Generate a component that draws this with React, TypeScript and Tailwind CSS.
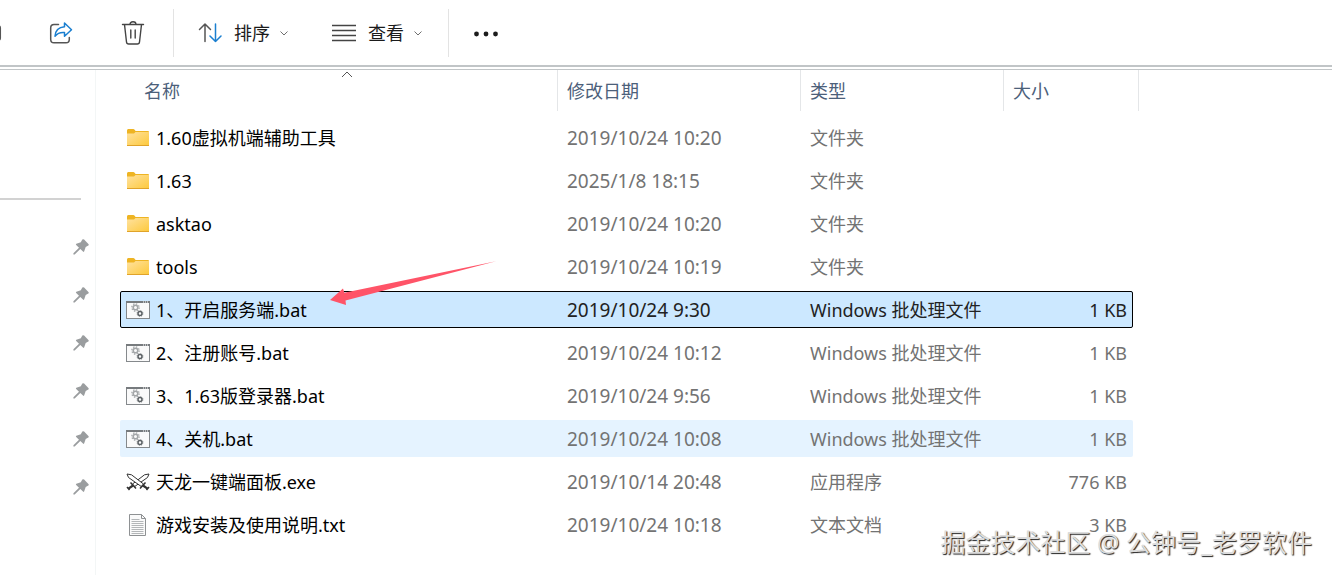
import { clsx } from "clsx";

type FileKind = "folder" | "bat" | "exe" | "txt";

type FileRow = {
  name: string;
  date: string;
  type: string;
  size: string;
  kind: FileKind;
};

const FILES: FileRow[] = [
  { name: "1.60虚拟机端辅助工具", date: "2019/10/24 10:20", type: "文件夹", size: "", kind: "folder" },
  { name: "1.63", date: "2025/1/8 18:15", type: "文件夹", size: "", kind: "folder" },
  { name: "asktao", date: "2019/10/24 10:20", type: "文件夹", size: "", kind: "folder" },
  { name: "tools", date: "2019/10/24 10:19", type: "文件夹", size: "", kind: "folder" },
  { name: "1、开启服务端.bat", date: "2019/10/24 9:30", type: "Windows 批处理文件", size: "1 KB", kind: "bat" },
  { name: "2、注册账号.bat", date: "2019/10/24 10:12", type: "Windows 批处理文件", size: "1 KB", kind: "bat" },
  { name: "3、1.63版登录器.bat", date: "2019/10/24 9:56", type: "Windows 批处理文件", size: "1 KB", kind: "bat" },
  { name: "4、关机.bat", date: "2019/10/24 10:08", type: "Windows 批处理文件", size: "1 KB", kind: "bat" },
  { name: "天龙一键端面板.exe", date: "2019/10/14 20:48", type: "应用程序", size: "776 KB", kind: "exe" },
  { name: "游戏安装及使用说明.txt", date: "2019/10/24 10:18", type: "文本文档", size: "3 KB", kind: "txt" },
];

const SELECTED = 4;
const HOVERED = 7;
const PINS = [1, 2, 3, 4, 5, 6];

function FolderIcon() {
  return (
    <svg width="24" height="24" viewBox="0 0 24 24">
      <defs>
        <linearGradient id="folder" x1="0" y1="0" x2="1" y2="1">
          <stop offset="0" stopColor="#ffe2a0" />
          <stop offset="1" stopColor="#fdc93c" />
        </linearGradient>
      </defs>
      <path d="M1 4.500q0-1.500 1.200-1.500h5.200q.6 0 1 .5L9.600 5H22q1 0 1 1v6H1z" fill="#eeb423" />
      <path d="M1 7.500h7L9.500 6H23v13.500H1z" fill="url(#folder)" />
      <path d="M1 19.500h22" stroke="#e0a32a" />
    </svg>
  );
}

function BatIcon() {
  return (
    <svg width="24" height="24" viewBox="0 0 24 24">
      <rect x=".5" y="3.500" width="23" height="17" fill="#fafafa" stroke="#85898c" />
      <path d="M0 4h24" stroke="#777b7e" strokeWidth="2" />
      <path d="M17 4h1M19 4h1M21 4h1" stroke="#fff" />
      <circle cx="9.500" cy="9.500" r="2.300" fill="none" stroke="#a3a6a8" strokeWidth="1.600" />
      <circle cx="9.500" cy="9.500" r="3.700" fill="none" stroke="#a3a6a8" strokeWidth="1.200" strokeDasharray="1.450 1.450" />
      <circle cx="14" cy="15.500" r="2" fill="none" stroke="#5c6164" strokeWidth="1.500" />
      <circle cx="14" cy="15.500" r="3" fill="none" stroke="#5c6164" strokeWidth=".6" strokeDasharray="1.180 1.180" />
    </svg>
  );
}

function SwordsIcon() {
  return (
    <svg width="24" height="24" viewBox="0 0 24 24" fill="none" stroke="#333">
      <path d="M23 4l-4.500.8L6.500 14l2.200 2.500L21.500 7.500z" fill="#fff" />
      <path d="M1 4l4.500.8L17.500 14l-2.200 2.500L2.500 7.500z" fill="#fff" />
      <path d="M4.500 12.500l5.500 6M19.500 12.500l-5.500 6" strokeWidth="1.500" />
      <path d="M7 15.500L2.500 18.700M17 15.500l4.500 3.200" strokeWidth="2.200" />
      <path d="M1 17l2.500 3M23 17l-2.500 3" strokeWidth="1.500" />
    </svg>
  );
}

function TextIcon() {
  return (
    <svg width="24" height="24" viewBox="0 0 24 24" fill="none" stroke="#8e9193">
      <path d="M3.500 1.500h12l4 4v17h-16z" fill="#fafafa" />
      <path d="M15.500 1.500v4h4" />
      <path d="M5.500 6.500h8M5.500 8.500h12M5.500 10.500h12M5.500 12.500h12M5.500 14.500h12M5.500 16.500h12M5.500 18.500h12M5.500 20.500h12" stroke="#b3b6b8" />
    </svg>
  );
}

function FileIcon({ kind }: { kind: FileKind }) {
  if (kind === "folder") return <FolderIcon />;
  if (kind === "bat") return <BatIcon />;
  if (kind === "exe") return <SwordsIcon />;
  return <TextIcon />;
}

function PinIcon() {
  return (
    <svg width="16" height="16" viewBox="0 0 16 16" fill="#9a9d9f">
      <path d="M9.300.6q.9-.8 1.800 0l4.300 4.300q.8.9-.1 1.500l-2.600 1.500-1.500 4.400q-.4 1-1.200.3L7.300 10 1.700 15.600H.4v-1.300L6 8.700 3.200 5.900q-.7-.8.2-1.200l4.400-1.500z" />
    </svg>
  );
}

function Chevron() {
  return (
    <svg width="8" height="8" viewBox="0 0 8 8" fill="none" stroke="#6f6f6f">
      <path d="M.5 2.500L4 6l3.500-3.500" />
    </svg>
  );
}

function Toolbar() {
  return (
    <header className="flex h-[65px] items-center overflow-hidden">
      <button aria-label="重命名" className="flex w-[49px] items-center">
        <svg width="2" height="16" viewBox="0 0 2 16" fill="none" stroke="#555" strokeWidth="1.500">
          <path d="M-2 .8Q.3 .8 .3 3v10q0 2.200-2.300 2.200" />
        </svg>
      </button>
      <button aria-label="共享" className="mr-12">
        <svg width="24" height="24" viewBox="0 0 24 24" fill="none" strokeWidth="1.500" strokeLinecap="round" strokeLinejoin="round">
          <path d="M9.500 3.500H5Q1.700 3.500 1.700 7v11.500q0 3.300 3.300 3.300h12q3.300 0 3.300-3.300v-2" stroke="#555" />
          <path d="M15.500 2l7 6.700-7 6.500v-3.700q-6-.6-9.500 3.700Q6.500 6.500 15.500 5.700z" stroke="#1a7fd0" />
        </svg>
      </button>
      <button aria-label="删除" className="mr-7">
        <svg width="24" height="24" viewBox="0 0 24 24" fill="none" stroke="#444" strokeWidth="1.400" strokeLinecap="round" strokeLinejoin="round">
          <path d="M1.500 3.500h21M9 3.500Q9 .8 12 .8t3 2.700M3.500 3.500l2 17.500q.2 2 2.200 2h8.600q2 0 2.200-2l2-17.500M9.800 9v8M14.200 9v8" />
        </svg>
      </button>
      <span className="h-12 w-px bg-[#e3e3e3]" />
      <button className="ml-6 flex items-center">
        <svg width="24" height="24" viewBox="0 0 24 24" fill="none" strokeWidth="1.500" strokeLinecap="round" strokeLinejoin="round">
          <path d="M7 20.500V3M1.500 8.500L7 3l5.500 5.500" stroke="#555" />
          <path d="M17.500 3v17.500M12 15l5.500 5.500L23 15" stroke="#1a7fd0" />
        </svg>
        <span className="ml-3 mr-2.5 text-lg">排序</span>
        <Chevron />
      </button>
      <button className="ml-11 flex items-center">
        <svg width="24" height="24" viewBox="0 0 24 24" stroke="#444" strokeWidth="1.400">
          <path d="M0 4.500h24M0 9.500h24M0 14.500h24M0 19.500h24" />
        </svg>
        <span className="ml-3 mr-2.5 text-lg">查看</span>
        <Chevron />
      </button>
      <span className="ml-[26px] h-12 w-px bg-[#e3e3e3]" />
      <button aria-label="更多" className="ml-6">
        <svg width="26" height="24" viewBox="0 0 26 24" fill="#1c1c1c">
          <circle cx="3.500" cy="13" r="2.400" />
          <circle cx="13" cy="13" r="2.400" />
          <circle cx="22.500" cy="13" r="2.400" />
        </svg>
      </button>
    </header>
  );
}

function Sidebar() {
  return (
    <aside className="flex w-24 shrink-0 flex-col border-r border-[#f3f6f6] pt-32">
      <hr className="mr-3.5 border-t-2 border-[#d2d2d2]" />
      <ul className="flex flex-col items-end gap-8 pr-1.5 pt-[39px]">
        {PINS.map((pin) => (
          <li key={pin}>
            <PinIcon />
          </li>
        ))}
      </ul>
    </aside>
  );
}

function RedArrow() {
  return (
    <svg className="absolute -top-[30px] left-[210px] z-10" width="166" height="45" viewBox="0 0 166 45" fill="#ff5468">
      <path d="M0 39L13 27.500l1.300 4.300L166 .2 15.500 39.500l.5 4.500z" />
    </svg>
  );
}

function FileTable() {
  return (
    <table className="block pl-6">
      <thead className="block">
        <tr className="grid h-[41px] grid-cols-[438px_243px_203px_135px] text-left text-lg text-[#4c607a]">
          <th scope="col" className="relative flex items-center border-r border-[#e4e6e8] pl-6 font-normal">
            名称
            <svg className="absolute left-1/2 top-0 ml-0.5" width="12" height="8" viewBox="0 0 12 8" fill="none" stroke="#555">
              <path d="M1 7l5-5 5 5" />
            </svg>
          </th>
          <th scope="col" className="flex items-center border-r border-[#e4e6e8] pl-[9px] font-normal">修改日期</th>
          <th scope="col" className="flex items-center border-r border-[#e4e6e8] pl-[9px] font-normal">类型</th>
          <th scope="col" className="flex items-center border-r border-[#e4e6e8] pl-[9px] font-normal">大小</th>
        </tr>
      </thead>
      <tbody className="flex flex-col items-start gap-1.5 pt-2">
        {FILES.map((file, i) => (
          <tr
            key={file.name}
            className={clsx(
              "grid h-[37px] grid-cols-[438px_243px_203px_129px] rounded-[2px] text-lg",
              i === SELECTED && "bg-[#cce8ff] text-[#222] outline outline-1 -outline-offset-1 outline-black",
              i === HOVERED && "bg-[#e5f3ff]",
              i !== SELECTED && "text-[#737373]"
            )}
          >
            <td className="relative flex items-center gap-1.5 pl-1.5 text-black">
              <FileIcon kind={file.kind} />
              {file.name}
              {i === SELECTED && <RedArrow />}
            </td>
            <td className="flex items-center pl-[9px] pt-0.5 text-[19px]">{file.date}</td>
            <td className="flex items-center pl-[9px]">{file.type}</td>
            <td className="flex items-center justify-end pr-1.5">{file.size}</td>
          </tr>
        ))}
      </tbody>
    </table>
  );
}

function App() {
  return (
    <div
      lang="zh-CN"
      className="relative flex min-h-screen flex-col overflow-hidden bg-white font-['Noto_Sans','Noto_Sans_CJK_SC',sans-serif] text-[#1b1b1b]"
    >
      <Toolbar />
      <div className="h-[5px] border-b border-t-2 border-[#c1c5c7]" />
      <main className="flex flex-1">
        <Sidebar />
        <FileTable />
      </main>
      <p className="absolute bottom-3.5 right-5 whitespace-nowrap text-[25px] text-[#dcdcdc] [text-shadow:1px_1px_1px_#222]">
        掘金技术社区 @ 公钟号_老罗软件
      </p>
    </div>
  );
}

export default App;
